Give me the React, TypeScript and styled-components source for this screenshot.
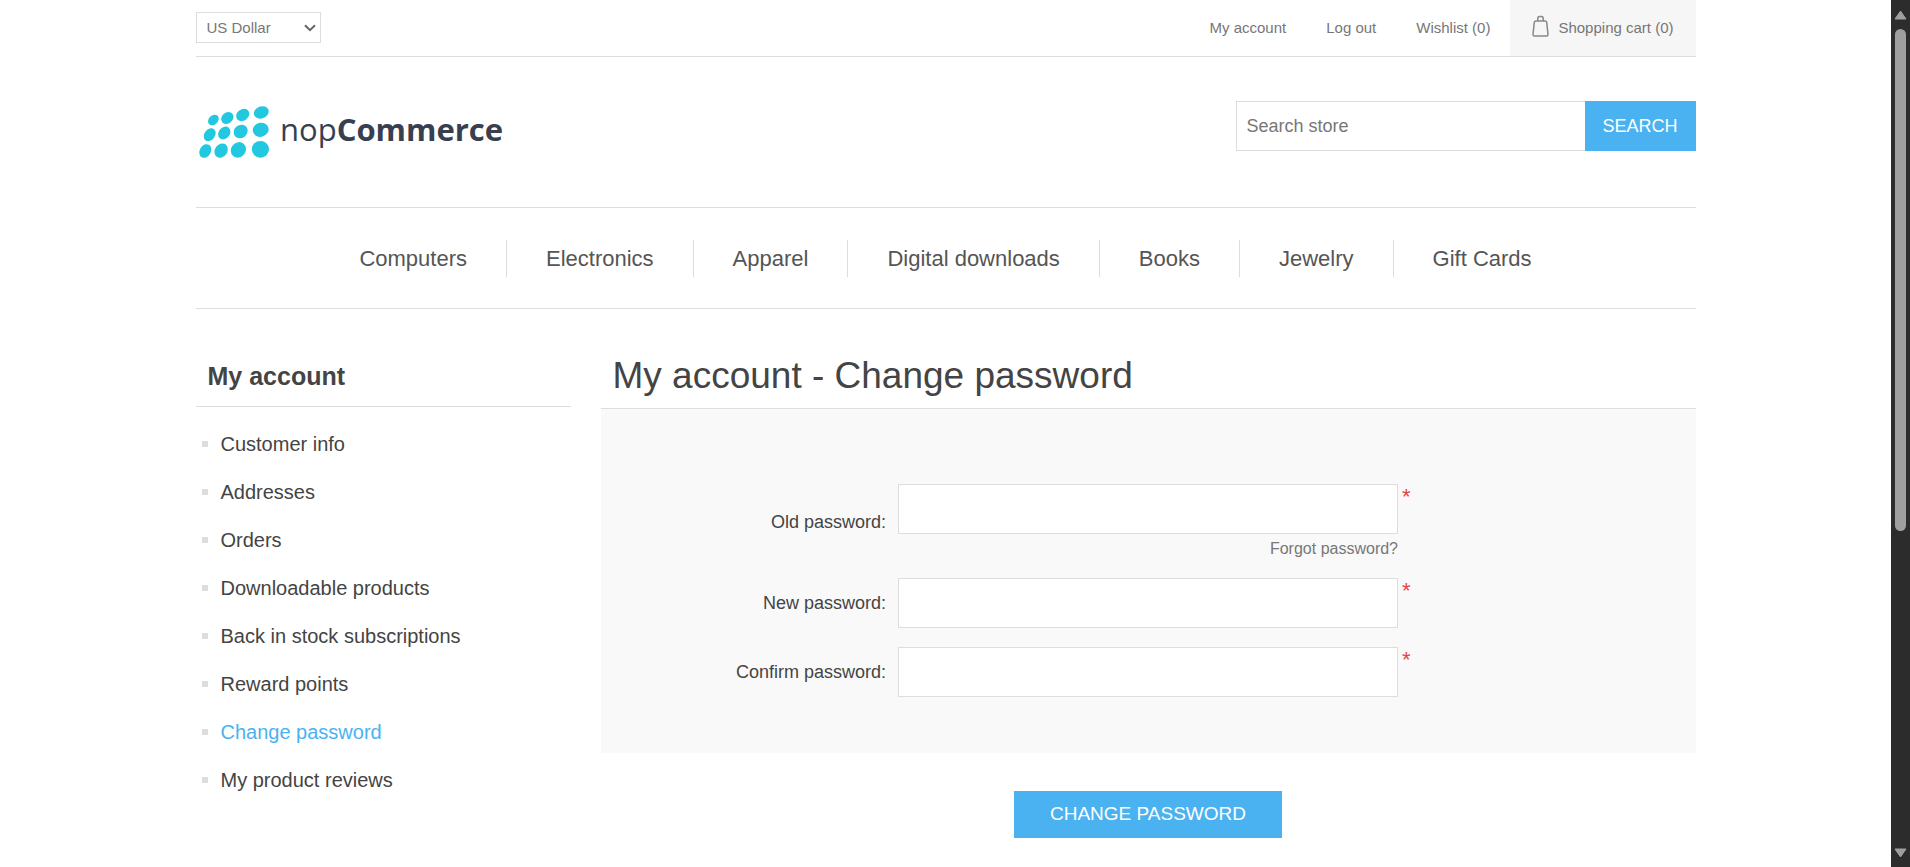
import React from 'react';
import styled, { createGlobalStyle } from 'styled-components';

const GlobalStyle = createGlobalStyle`
  * { box-sizing: border-box; }
  body {
    margin: 0;
    background: #fff;
    color: #444;
    font-family: 'Liberation Sans', Arial, Helvetica, sans-serif;
    font-size: 18px;
  }
  a { color: inherit; text-decoration: none; }
  ul { list-style: none; margin: 0; padding: 0; }
  h1, h2 { margin: 0; }
  button, input, select { font-family: inherit; border-radius: 0; }
`;

const Viewport = styled.div`
  display: flex;
  height: 100vh;
  overflow: hidden;
`;

const Page = styled.div`
  flex: 1;
  min-width: 0;
  overflow: hidden;
`;

const Wrapper = styled.div`
  width: calc(100% - 32px);
  max-width: 1500px;
  margin: 0 auto;
`;

const TopBar = styled.div`
  display: flex;
  align-items: flex-start;
  justify-content: space-between;
  height: 57px;
  border-bottom: 1px solid #ddd;
`;

const CurrencyBox = styled.div`
  position: relative;
  display: flex;
  align-items: center;
  margin-top: 12px;
  color: #777;

  svg {
    position: absolute;
    right: 5px;
    pointer-events: none;
  }
`;

const CurrencySelect = styled.select`
  appearance: none;
  width: 125px;
  height: 31px;
  padding: 0 10px;
  border: 1px solid #ddd;
  background: #fff;
  color: #777;
  font-size: 15px;
`;

const HeaderLinks = styled.ul`
  display: flex;
  align-items: stretch;
  gap: 40px;
  height: 100%;
  color: #777;
  font-size: 15px;
  line-height: 56px;
`;

const CartItem = styled.li`
  margin-left: -20px;
  padding: 0 22px;
  background: #f6f6f6;

  a {
    display: flex;
    align-items: center;
    gap: 9px;
  }

  svg { margin-bottom: 4px; }
`;

const Header = styled.header`
  display: flex;
  align-items: center;
  justify-content: space-between;
  padding: 44px 0 56px;
`;

const LogoLink = styled.a`
  display: block;
  height: 50px;

  svg { display: block; }
`;

const SearchForm = styled.form`
  display: flex;
`;

const SearchInput = styled.input`
  width: 349px;
  height: 50px;
  padding: 0 10px;
  border: 1px solid #ddd;
  border-right: 0;
  color: #777;
  font-size: 18px;
  outline: none;

  &::placeholder { color: #777; opacity: 1; }
`;

const PrimaryButton = styled.button`
  border: 0;
  background: #4ab2f1;
  color: #fff;
  text-transform: uppercase;
  cursor: pointer;
`;

const SearchButton = styled(PrimaryButton)`
  width: 111px;
  height: 50px;
  font-size: 18px;
`;

const Menu = styled.nav`
  border-top: 1px solid #ddd;
  border-bottom: 1px solid #ddd;
  padding: 32px 0 31px;

  ul {
    display: flex;
    justify-content: center;
  }

  li {
    padding: 0 39px;
    color: #555;
    font-size: 22px;
    line-height: 37px;
  }

  li + li { border-left: 1px solid #ddd; }
`;

const Content = styled.div`
  display: flex;
  justify-content: space-between;
  align-items: flex-start;
  padding-top: 38px;
`;

const Side = styled.aside`
  width: 25%;
`;

const SideTitle = styled.h2`
  padding: 0 12px;
  height: 60px;
  border-bottom: 1px solid #ddd;
  font-size: 25px;
  line-height: 58px;
`;

const SideList = styled.ul`
  padding: 13px 6px;
`;

const SideItem = styled.li<{ $active?: boolean }>`
  display: flex;
  align-items: center;
  gap: 13px;
  color: ${(p) => (p.$active ? '#4ab2f1' : '#444')};
  font-size: 20px;
  line-height: 48px;

  &::before {
    content: '';
    width: 6px;
    height: 6px;
    background: #ddd;
  }
`;

const Main = styled.main`
  width: 73%;
`;

const PageTitle = styled.h1`
  height: 62px;
  padding: 0 12px;
  border-bottom: 1px solid #ddd;
  font-size: 37px;
  font-weight: normal;
  line-height: 57px;
`;

const Fieldset = styled.div`
  display: flex;
  flex-direction: column;
  gap: 19px;
  padding: 75px 20px 56px;
  background: #f9f9f9;
`;

const Field = styled.div`
  display: grid;
  grid-template-columns: 1fr 500px 1fr;
  align-items: center;
  column-gap: 12px;
`;

const FieldLabel = styled.label`
  text-align: right;
  font-size: 18px;
  line-height: 24px;
`;

const FieldBody = styled.div`
  display: flex;
  flex-direction: column;
`;

const PasswordInput = styled.input`
  width: 100%;
  height: 50px;
  padding: 0 10px;
  border: 1px solid #ddd;
  background: #fff;
  font-size: 18px;
  outline: none;
`;

const Required = styled.span`
  align-self: start;
  margin-left: -8px;
  color: #e4434b;
  font-size: 22px;
  line-height: 26px;
`;

const ForgotLink = styled.a`
  align-self: flex-end;
  padding-top: 5px;
  color: #777;
  font-size: 16px;
  line-height: 20px;
`;

const Actions = styled.div`
  display: flex;
  justify-content: center;
  padding: 38px 0;
`;

const SubmitButton = styled(PrimaryButton)`
  width: 268px;
  height: 47px;
  padding-bottom: 3px;
  font-size: 19px;
`;

const ScrollTrack = styled.div`
  display: flex;
  flex-direction: column;
  align-items: center;
  width: 19px;
  padding: 10px 0 9px;
  background: #2c2c2c;

  svg { display: block; flex: none; }
`;

const ScrollRail = styled.div`
  flex: 1;
  width: 11px;
  padding: 9px 0;
`;

const ScrollThumb = styled.div`
  height: 62%;
  border-radius: 6px;
  background: #9f9f9f;
`;

// Each dot: centre x, centre y, long radius, short radius, tilt in degrees.
const dots = [
  [17.4, 25, 6, 4.6, -45], [31.3, 23, 6.7, 5.4, -40], [46.7, 20, 7.1, 5.6, -38], [65.3, 17.4, 7.6, 6, -20],
  [13.7, 39.7, 7, 5.3, -52], [28.3, 38, 6.9, 5.6, -50], [44.7, 36.5, 7.4, 6.4, -40], [64.7, 34.8, 8, 7, -15],
  [9.3, 56, 7.2, 5.6, -60], [25.1, 55.6, 7.6, 6.2, -55], [42.4, 54.9, 8.1, 7.3, -50], [64.4, 54.3, 8.6, 8.4, 0],
];

const Logo = () => (
  <svg width="320" height="62" viewBox="0 6 320 62" role="img" aria-label="nopCommerce">
    <g fill="#22c7e0">
      {dots.map(([x, y, rx, ry, r]) => (
        <ellipse key={`${x}-${y}`} cx={x} cy={y} rx={rx} ry={ry} transform={`rotate(${r} ${x} ${y})`} />
      ))}
    </g>
    <text x="84" y="46" fill="#373f51" fontFamily="'Open Sans', 'Noto Sans', sans-serif" fontSize="31">
      nop<tspan fontWeight="700">Commerce</tspan>
    </text>
  </svg>
);

const BagIcon = () => (
  <svg width="17" height="22" viewBox="0 0 17 22" fill="none" stroke="#888" strokeWidth="1.5" aria-hidden="true">
    <path d="M3.8 6h9.4q1.3 0 1.5 1.3l1.3 12q.1 1.6-1.4 1.6H2.4Q.9 20.900 1 19.300l1.300-12Q2.500 6 3.800 6z" strokeLinejoin="round" />
    <path d="M5.8 6V3.400Q5.800 1.500 7.500 1.500h2Q11.200 1.500 11.200 3.400V6" />
  </svg>
);

const categories = ['Computers', 'Electronics', 'Apparel', 'Digital downloads', 'Books', 'Jewelry', 'Gift Cards'];

const accountLinks = [
  'Customer info', 'Addresses', 'Orders', 'Downloadable products',
  'Back in stock subscriptions', 'Reward points', 'Change password', 'My product reviews',
];

const fields = [
  { id: 'old-password', label: 'Old password:', forgot: true },
  { id: 'new-password', label: 'New password:' },
  { id: 'confirm-password', label: 'Confirm password:' },
];

export default function App() {
  return (
    <>
      <GlobalStyle />
      <Viewport>
        <Page>
          <Wrapper>
            <TopBar>
              <CurrencyBox>
                <CurrencySelect aria-label="Currency selector" defaultValue="usd">
                  <option value="usd">US Dollar</option>
                  <option value="eur">Euro</option>
                </CurrencySelect>
                <svg width="12" height="8" viewBox="0 0 12 8" fill="none" stroke="#666" strokeWidth="2" aria-hidden="true">
                  <path d="M1 1.2l5 5 5-5" />
                </svg>
              </CurrencyBox>
              <HeaderLinks>
                <li><a href="#account">My account</a></li>
                <li><a href="#logout">Log out</a></li>
                <li><a href="#wishlist">Wishlist (0)</a></li>
                <CartItem><a href="#cart"><BagIcon />Shopping cart (0)</a></CartItem>
              </HeaderLinks>
            </TopBar>
            <Header>
              <LogoLink href="#home"><Logo /></LogoLink>
              <SearchForm onSubmit={(e) => e.preventDefault()}>
                <SearchInput type="text" placeholder="Search store" aria-label="Search store" />
                <SearchButton type="submit">Search</SearchButton>
              </SearchForm>
            </Header>
            <Menu>
              <ul>
                {categories.map((c) => <li key={c}><a href="#category">{c}</a></li>)}
              </ul>
            </Menu>
            <Content>
              <Side>
                <SideTitle>My account</SideTitle>
                <SideList>
                  {accountLinks.map((l) => (
                    <SideItem key={l} $active={l === 'Change password'}><a href="#account">{l}</a></SideItem>
                  ))}
                </SideList>
              </Side>
              <Main>
                <PageTitle>My account - Change password</PageTitle>
                <form onSubmit={(e) => e.preventDefault()}>
                  <Fieldset>
                    {fields.map((f) => (
                      <Field key={f.id}>
                        <FieldLabel htmlFor={f.id}>{f.label}</FieldLabel>
                        <FieldBody>
                          <PasswordInput id={f.id} type="password" />
                          {f.forgot && <ForgotLink href="#recovery">Forgot password?</ForgotLink>}
                        </FieldBody>
                        <Required>*</Required>
                      </Field>
                    ))}
                  </Fieldset>
                  <Actions>
                    <SubmitButton type="submit">Change password</SubmitButton>
                  </Actions>
                </form>
              </Main>
            </Content>
          </Wrapper>
        </Page>
        <ScrollTrack aria-hidden="true">
          <svg width="13" height="10" viewBox="0 0 13 10" fill="#9f9f9f" stroke="#9f9f9f" strokeLinejoin="round">
            <path d="M6.5 1L12 9H1z" />
          </svg>
          <ScrollRail><ScrollThumb /></ScrollRail>
          <svg width="13" height="10" viewBox="0 0 13 10" fill="#9f9f9f" stroke="#9f9f9f" strokeLinejoin="round">
            <path d="M6.5 9L12 1H1z" />
          </svg>
        </ScrollTrack>
      </Viewport>
    </>
  );
}
